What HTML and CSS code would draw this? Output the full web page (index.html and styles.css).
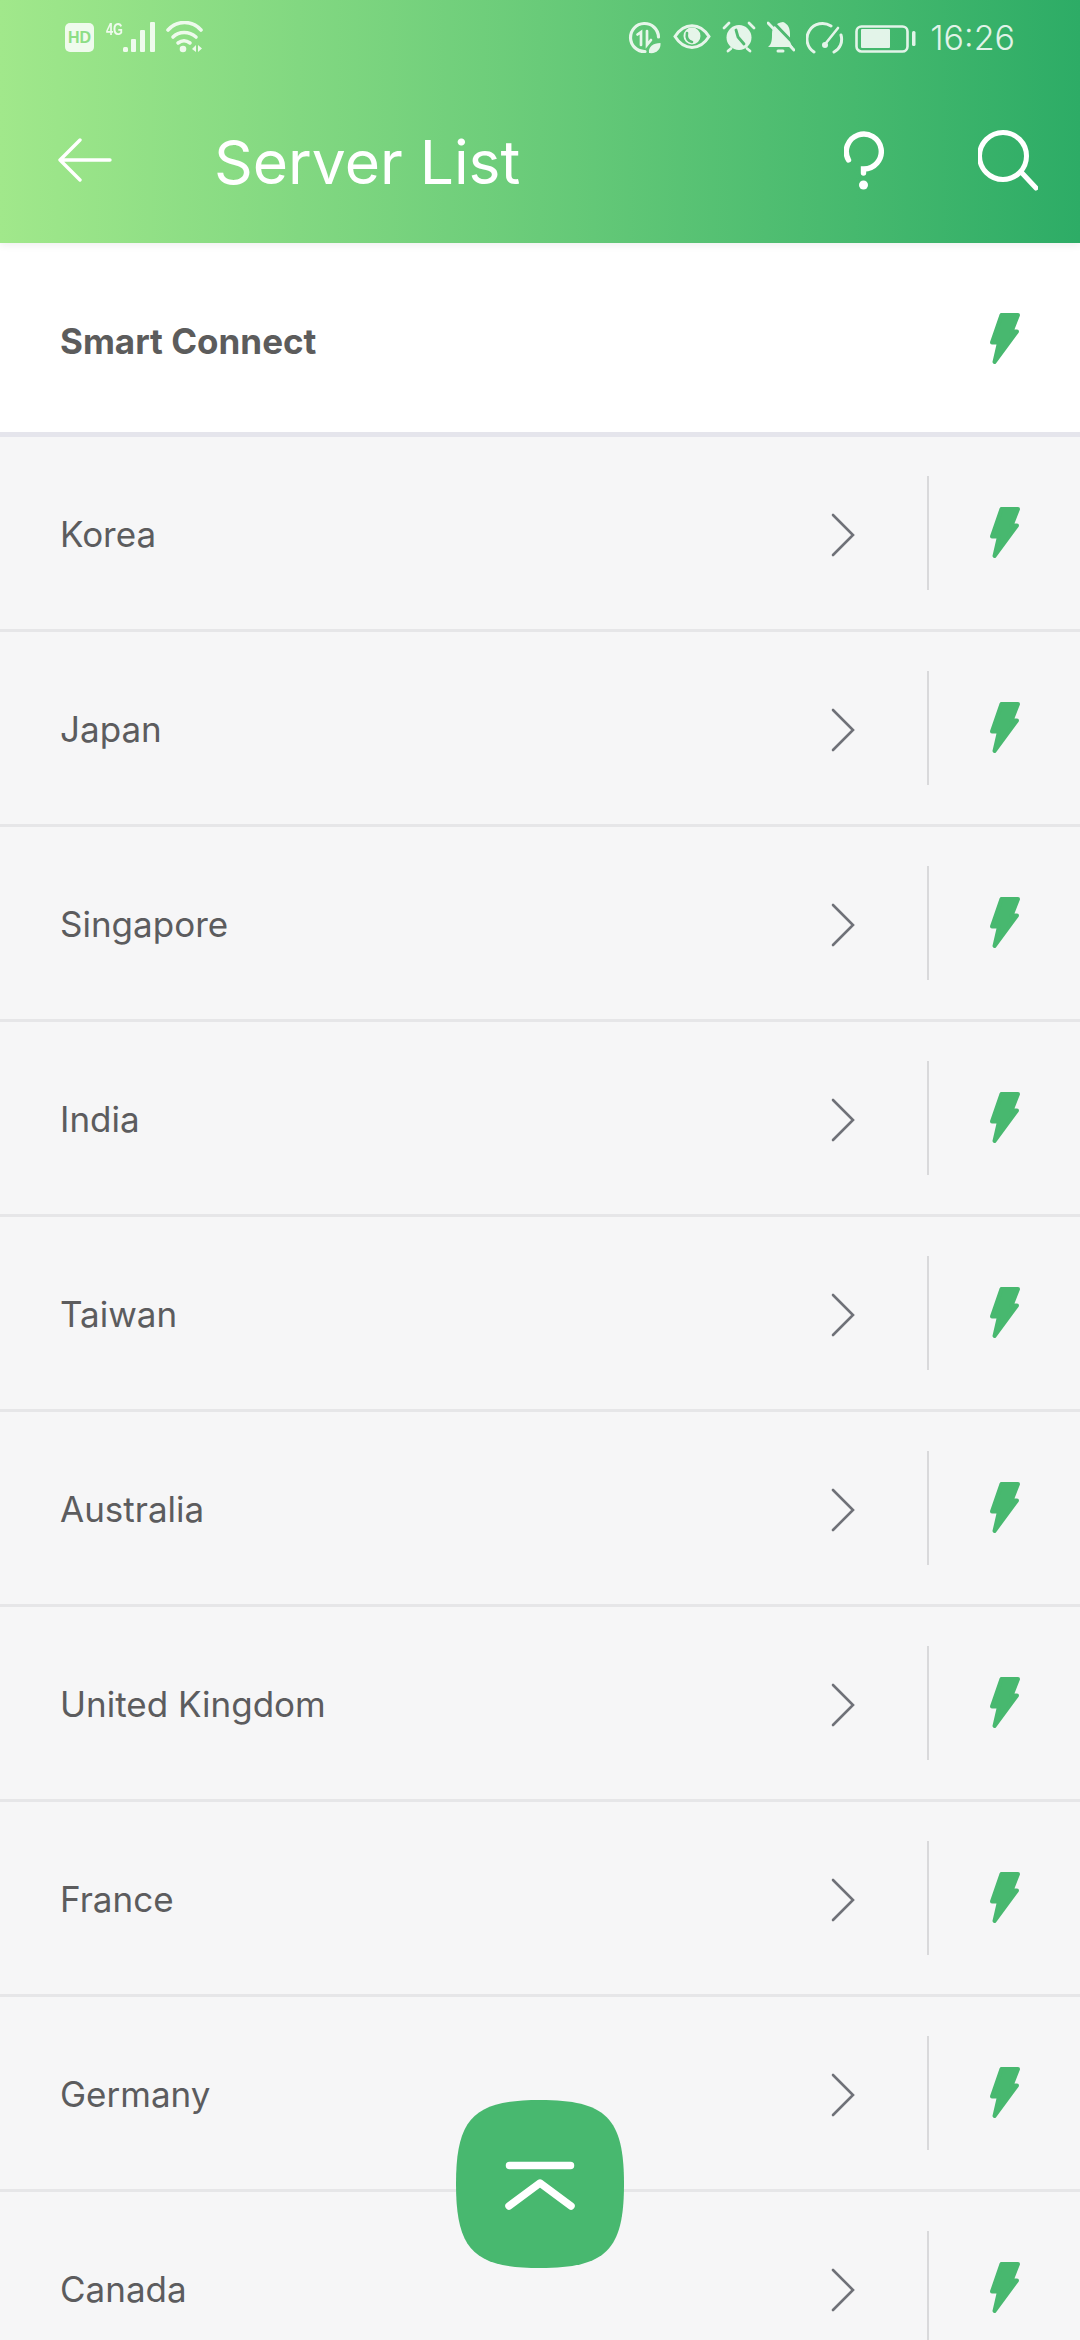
FILE: index.html
```html
<!DOCTYPE html>
<html lang="en">
<head>
    <meta charset="UTF-8">
    <title>Server List</title>
    <link rel="stylesheet" href="styles.css">
</head>
<body>
<svg class="defs" width="0" height="0">
    <symbol id="bolt" viewBox="0 0 32 54">
        <path d="M12.500 3H29L22.500 19.500H28L5.500 50L10 30.500H3Z" fill="#48b86f" stroke="#48b86f" stroke-width="4" stroke-linejoin="round"/>
    </symbol>
    <symbol id="chevron" viewBox="0 0 24 44">
        <path d="M2 2L22 22L2 42" fill="none" stroke="#6f7178" stroke-width="2.6" stroke-linecap="round" stroke-linejoin="miter"/>
    </symbol>
</svg>
<div class="phone">
    <header class="topbar">
        <div class="status">
            <div class="status-left">
                <span class="hd">HD</span>
                <span class="net">4G</span>
                <svg class="signal" width="32" height="34" viewBox="0 0 32 34" fill="#fff">
                    <rect x="0" y="26" width="5" height="5" rx="1.500"/>
                    <rect x="8" y="18" width="5" height="13" rx="1"/>
                    <rect x="17" y="9" width="5" height="22" rx="1"/>
                    <rect x="27" y="1" width="5" height="30" rx="1"/>
                </svg>
                <svg class="wifi" width="37" height="34" viewBox="0 0 37 34" fill="none" stroke="#fff" stroke-width="3.6" stroke-linecap="round">
                    <path d="M2 9C11 -1 26 -1 35 9"/>
                    <path d="M7 16C13 10 23 10 30 16"/>
                    <path d="M12 22C16 19 20 19 24 22"/>
                    <circle cx="17" cy="28" r="3.300" fill="#fff" stroke="none"/>
                    <path d="M26 28l4-4v7zM32 24l4 3.500-4 3.500z" fill="#fff" stroke="none"/>
                </svg>
            </div>
            <div class="status-right">
                <svg width="34" height="34" viewBox="0 0 34 34" fill="none" stroke="#fff" stroke-width="3.200" stroke-linecap="round">
                    <path d="M17 30.500A14 14 0 1 1 30.500 16"/>
                    <path d="M9.500 13.500L13 11V24M19 10V24L23 19" stroke-width="2.700"/>
                    <path d="M21 32C20 26 25 22 32.500 22C33 28 29 33 21 32Z" fill="#fff" stroke="none"/>
                </svg>
                <svg width="38" height="34" viewBox="0 0 38 34" fill="none" stroke="#fff" stroke-width="3">
                    <path d="M2 15.500C11 1 27 1 36 15.500C27 30 11 30 2 15.500Z"/>
                    <circle cx="19" cy="15" r="8.500" fill="#fff" stroke="none"/>
                    <path d="M14 12C13 17 15 20 19 21" stroke="#58bd75" stroke-width="2.600" stroke-linecap="round"/>
                </svg>
                <svg width="34" height="34" viewBox="0 0 34 34" stroke="#fff" stroke-linecap="round">
                    <circle cx="17" cy="16.500" r="12.500" fill="#fff" stroke="none"/>
                    <path d="M14 9L16 16L22 23" fill="none" stroke="#52ba72" stroke-width="2.800"/>
                    <path d="M2 7L7 2M32 7L27 2M6 30L9 27.500M28 30L25 27.500" stroke-width="2.800"/>
                </svg>
                <svg width="28" height="34" viewBox="0 0 28 34" stroke="#fff" stroke-linecap="round">
                    <path d="M1 26C5 23 5 18 5 13C5 6 9 2 16 1C21 3 23 7 23 13C23 19 23 23 26 26Z" fill="#fff" stroke="none"/>
                    <path d="M11 30h5" stroke-width="3"/>
                    <path d="M4 -1L30 26" stroke="#4eb972" stroke-width="3"/>
                    <path d="M1 2L27 29" stroke-width="3"/>
                </svg>
                <svg width="38" height="34" viewBox="0 0 38 34" fill="none" stroke="#fff" stroke-width="3" stroke-linecap="round">
                    <path d="M8 31A15.500 15.500 0 0 1 25 5"/>
                    <path d="M28 31C34 28 37 21 35 14"/>
                    <path d="M20 22L32 7" stroke-width="2.600"/>
                    <circle cx="19" cy="24" r="3" fill="#fff" stroke="none"/>
                </svg>
                <svg width="61" height="34" viewBox="0 0 61 34" fill="none" stroke="#fff">
                    <rect x="1.500" y="5.500" width="51" height="25" rx="5" stroke-width="2.600"/>
                    <rect x="6" y="8" width="29" height="19" rx="1" fill="#fff" stroke="none"/>
                    <rect x="57" y="10" width="3.500" height="15" rx="1.500" fill="#fff" stroke="none"/>
                </svg>
                <span class="clock">16:26</span>
            </div>
        </div>
        <div class="toolbar">
            <svg class="back" width="54" height="44" viewBox="0 0 54 44" fill="none" stroke="#fff" stroke-width="3.400" stroke-linecap="round" stroke-linejoin="round">
                <path d="M22 2L2 22L22 42M2 22H52"/>
            </svg>
            <h1 class="title">Server List</h1>
            <svg class="help" width="40" height="62" viewBox="0 0 40 62" fill="none" stroke="#fff" stroke-width="5.400" stroke-linecap="round">
                <path d="M4.500 31A17.500 17.500 0 1 1 19.500 40V44"/>
                <circle cx="19.500" cy="56" r="4.500" fill="#fff" stroke="none"/>
            </svg>
            <svg class="find" width="60" height="62" viewBox="0 0 60 62" fill="none" stroke="#fff" stroke-width="5" stroke-linecap="round">
                <circle cx="25" cy="27" r="23.500"/>
                <path d="M44 44L58 59"/>
            </svg>
        </div>
    </header>

    <div class="smart">
        <span class="smart-name">Smart Connect</span>
        <svg class="bolt"><use href="#bolt"/></svg>
    </div>

    <ul class="servers">
        <li class="server">
            <span class="server-name">Korea</span>
            <svg class="chevron"><use href="#chevron"/></svg>
            <i class="divider"></i>
            <svg class="bolt"><use href="#bolt"/></svg>
        </li>
        <li class="server">
            <span class="server-name">Japan</span>
            <svg class="chevron"><use href="#chevron"/></svg>
            <i class="divider"></i>
            <svg class="bolt"><use href="#bolt"/></svg>
        </li>
        <li class="server">
            <span class="server-name">Singapore</span>
            <svg class="chevron"><use href="#chevron"/></svg>
            <i class="divider"></i>
            <svg class="bolt"><use href="#bolt"/></svg>
        </li>
        <li class="server">
            <span class="server-name">India</span>
            <svg class="chevron"><use href="#chevron"/></svg>
            <i class="divider"></i>
            <svg class="bolt"><use href="#bolt"/></svg>
        </li>
        <li class="server">
            <span class="server-name">Taiwan</span>
            <svg class="chevron"><use href="#chevron"/></svg>
            <i class="divider"></i>
            <svg class="bolt"><use href="#bolt"/></svg>
        </li>
        <li class="server">
            <span class="server-name">Australia</span>
            <svg class="chevron"><use href="#chevron"/></svg>
            <i class="divider"></i>
            <svg class="bolt"><use href="#bolt"/></svg>
        </li>
        <li class="server">
            <span class="server-name">United Kingdom</span>
            <svg class="chevron"><use href="#chevron"/></svg>
            <i class="divider"></i>
            <svg class="bolt"><use href="#bolt"/></svg>
        </li>
        <li class="server">
            <span class="server-name">France</span>
            <svg class="chevron"><use href="#chevron"/></svg>
            <i class="divider"></i>
            <svg class="bolt"><use href="#bolt"/></svg>
        </li>
        <li class="server">
            <span class="server-name">Germany</span>
            <svg class="chevron"><use href="#chevron"/></svg>
            <i class="divider"></i>
            <svg class="bolt"><use href="#bolt"/></svg>
        </li>
        <li class="server">
            <span class="server-name">Canada</span>
            <svg class="chevron"><use href="#chevron"/></svg>
            <i class="divider"></i>
            <svg class="bolt"><use href="#bolt"/></svg>
        </li>
    </ul>

    <button class="to-top">
        <svg width="168" height="168" viewBox="0 0 168 168">
            <path d="M84 0C150 0 168 18 168 84S150 168 84 168S0 150 0 84S18 0 84 0Z" fill="#48b86f"/>
            <path d="M53.500 65.500H114.500M53 106L84 83L115 106" fill="none" stroke="#fff" stroke-width="7.500" stroke-linecap="round" stroke-linejoin="round"/>
        </svg>
    </button>
</div>
</body>
</html>
```

FILE: styles.css
```css
* {
    margin: 0;
    padding: 0;
    box-sizing: border-box;
}

body {
    font-family: "Inter", "Noto Sans", sans-serif;
    background: #f6f6f7;
}

.defs {
    display: block;
    height: 0;
}

.phone {
    position: relative;
    width: 1080px;
    height: 2340px;
    overflow: hidden;
    background: #f6f6f7;
}

.topbar {
    position: relative;
    z-index: 1;
    height: 243px;
    background: linear-gradient(90deg, #a1e88b 0%, #69cb79 50%, #2dac66 100%);
    box-shadow: 0 2px 8px rgba(0, 0, 0, .07);
}

.status {
    display: flex;
    justify-content: space-between;
    height: 76px;
    padding: 21px 65px 0 65px;
    color: #fff;
}

.status-left,
.status-right {
    display: flex;
    align-items: flex-start;
    opacity: .85;
}

.status-right {
    gap: 11px;
}

.hd {
    width: 29px;
    height: 29px;
    margin-top: 2px;
    border-radius: 5px;
    background: #fff;
    color: #8cdd86;
    font-family: "Liberation Sans", sans-serif;
    font-size: 16px;
    font-weight: 700;
    line-height: 29px;
    text-align: center;
}

.net {
    width: 17px;
    margin-left: 12px;
    font-family: "Liberation Sans", sans-serif;
    font-size: 17px;
    font-weight: 700;
    line-height: 17px;
    transform: scaleX(.75);
    transform-origin: left;
}

.wifi {
    margin-left: 11px;
}

.clock {
    margin-left: 3px;
    font-size: 34px;
    line-height: 34px;
    font-weight: 300;
}

.toolbar {
    display: flex;
    align-items: center;
    height: 167px;
    padding: 0 42px 0 58px;
}

.title {
    flex: 1;
    margin-left: 102px;
    padding-top: 4px;
    color: #fff;
    font-size: 60.5px;
    font-weight: 400;
}

.find {
    margin-left: 94px;
}

.smart {
    display: flex;
    justify-content: space-between;
    align-items: center;
    height: 194px;
    padding: 3px 59px 0 60px;
    background: #fff;
    border-bottom: 5px solid #e5e5ec;
}

.smart-name {
    margin-top: 3px;
    color: #5c5c5c;
    font-size: 35px;
    font-weight: 700;
}

.servers {
    list-style: none;
}

.server {
    display: flex;
    align-items: center;
    height: 195px;
    padding: 0 59px 0 60px;
    border-bottom: 3px solid #e6e6e8;
}

.server-name {
    flex: 1;
    margin-top: 2px;
    color: #5c5c5e;
    font-size: 35px;
}

.chevron {
    width: 24px;
    height: 44px;
    margin-top: 4px;
}

.divider {
    width: 2px;
    height: 114px;
    margin: 0 60px 0 72px;
    background: #d9d9db;
}

.bolt {
    width: 32px;
    height: 54px;
}

.to-top {
    position: absolute;
    left: 456px;
    top: 2100px;
    width: 168px;
    height: 168px;
    border: 0;
    background: none;
}

.to-top svg {
    display: block;
}
```
